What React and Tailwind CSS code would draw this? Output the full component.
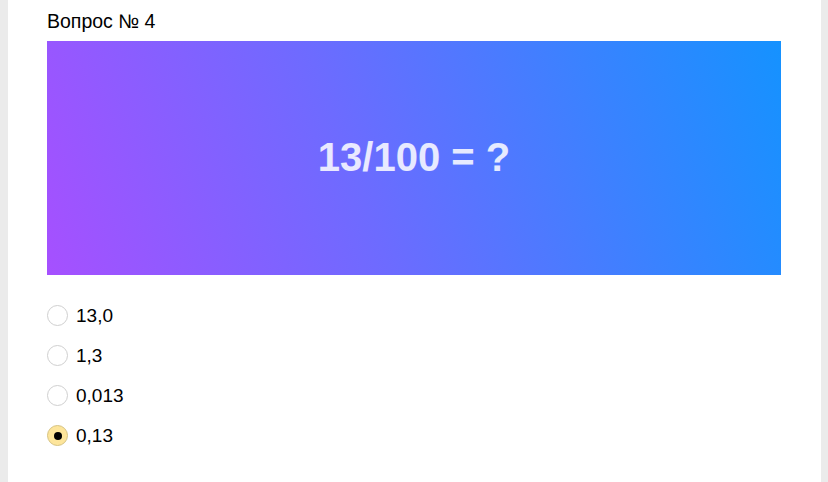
import React, { useState } from 'react'

const options = ['13,0', '1,3', '0,013', '0,13']

export default function App() {
  const [selected, setSelected] = useState(3)

  return (
    <div className="h-[482px] w-[828px] bg-[#ebebeb] flex px-[8px] overflow-hidden" style={{ fontFamily: '"Liberation Sans", Arial, sans-serif' }}>
      <div className="flex-1 bg-white pl-[39px] pr-[40px] pt-[10px]">
        <div className="text-[19.5px] leading-[22px] text-black">Вопрос № 4</div>

        {/* Question image */}
        <div className="mt-[9px] h-[234px] w-[734px] bg-[linear-gradient(70deg,#a650ff_0%,#6d6bff_42%,#3a82ff_75%,#1592ff_100%)] flex items-center justify-center">
          <span className="text-[40px] font-bold text-white/85 mt-[-2px]">13/100 = ?</span>
        </div>

        {/* Answers */}
        <div className="mt-[30px] flex flex-col gap-[19px]">
          {options.map((opt, i) => {
            const isSel = selected === i
            return (
              <label key={opt} className="flex items-center gap-[8px] cursor-pointer" onClick={() => setSelected(i)}>
                <span
                  className={`w-[21px] h-[21px] rounded-full border flex items-center justify-center ${
                    isSel ? 'bg-[#fde59b] border-[#d6c382]' : 'bg-white border-[#cfcfcf]'
                  }`}
                >
                  {isSel && <span className="w-[8px] h-[8px] rounded-full bg-black" />}
                </span>
                <span className="text-[19px] leading-[21px] text-black">{opt}</span>
              </label>
            )
          })}
        </div>
      </div>
    </div>
  )
}
